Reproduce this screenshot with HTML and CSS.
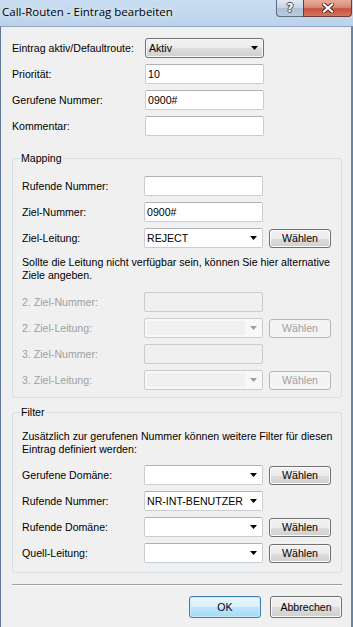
FILE: index.html
```html
<!DOCTYPE html>
<html>
<head>
    <meta charset="utf-8">
    <title>Call-Routen - Eintrag bearbeiten</title>
    <link rel="stylesheet" href="styles.css">
</head>
<body>
    <div id="dialog">
        <div id="titlebar">
            <span class="caption">Call-Routen - Eintrag bearbeiten</span>
            <div class="caption-buttons">
                <div class="cap-btn cap-help">?</div>
                <div class="cap-btn cap-close">
                    <svg width="12" height="10" viewBox="0 0 12 10">
                        <path d="M2 1.5 L10 8.5 M10 1.5 L2 8.5" stroke="#4a2a24" stroke-width="4" stroke-linecap="square"/>
                        <path d="M2 1.5 L10 8.5 M10 1.5 L2 8.5" stroke="#fff" stroke-width="2.2" stroke-linecap="square"/>
                    </svg>
                </div>
            </div>
        </div>
        <div id="client">
            <div class="rows">
                <div class="row">
                    <label>Eintrag aktiv/Defaultroute:</label>
                    <div class="combo list"><span class="value">Aktiv</span><span class="arrow"></span></div>
                </div>
                <div class="row">
                    <label>Priorität:</label>
                    <input type="text" class="edit" value="10">
                </div>
                <div class="row">
                    <label>Gerufene Nummer:</label>
                    <input type="text" class="edit" value="0900#">
                </div>
                <div class="row">
                    <label>Kommentar:</label>
                    <input type="text" class="edit" value="">
                </div>
            </div>

            <fieldset class="group mapping">
                <legend>Mapping</legend>
                <div class="rows">
                    <div class="row">
                        <label>Rufende Nummer:</label>
                        <input type="text" class="edit" value="">
                    </div>
                    <div class="row">
                        <label>Ziel-Nummer:</label>
                        <input type="text" class="edit" value="0900#">
                    </div>
                    <div class="row">
                        <label>Ziel-Leitung:</label>
                        <div class="combo"><span class="value">REJECT</span><span class="arrow"></span></div>
                        <button class="btn">Wählen</button>
                    </div>
                </div>
                <p class="hint">Sollte die Leitung nicht verfügbar sein, können Sie hier alternative<br>Ziele angeben.</p>
                <div class="rows">
                    <div class="row disabled">
                        <label>2. Ziel-Nummer:</label>
                        <input type="text" class="edit" disabled>
                    </div>
                    <div class="row disabled">
                        <label>2. Ziel-Leitung:</label>
                        <div class="combo"><span class="value"></span><span class="arrow"></span></div>
                        <button class="btn" disabled>Wählen</button>
                    </div>
                    <div class="row disabled">
                        <label>3. Ziel-Nummer:</label>
                        <input type="text" class="edit" disabled>
                    </div>
                    <div class="row disabled">
                        <label>3. Ziel-Leitung:</label>
                        <div class="combo"><span class="value"></span><span class="arrow"></span></div>
                        <button class="btn" disabled>Wählen</button>
                    </div>
                </div>
            </fieldset>

            <fieldset class="group filter">
                <legend>Filter</legend>
                <p class="hint">Zusätzlich zur gerufenen Nummer können weitere Filter für diesen<br>Eintrag definiert werden:</p>
                <div class="rows">
                    <div class="row">
                        <label>Gerufene Domäne:</label>
                        <div class="combo"><span class="value"></span><span class="arrow"></span></div>
                        <button class="btn">Wählen</button>
                    </div>
                    <div class="row">
                        <label>Rufende Nummer:</label>
                        <div class="combo"><span class="value">NR-INT-BENUTZER</span><span class="arrow"></span></div>
                    </div>
                    <div class="row">
                        <label>Rufende Domäne:</label>
                        <div class="combo"><span class="value"></span><span class="arrow"></span></div>
                        <button class="btn">Wählen</button>
                    </div>
                    <div class="row">
                        <label>Quell-Leitung:</label>
                        <div class="combo"><span class="value"></span><span class="arrow"></span></div>
                        <button class="btn">Wählen</button>
                    </div>
                </div>
            </fieldset>

            <div class="separator"></div>

            <div class="buttons">
                <button class="btn default">OK</button>
                <button class="btn">Abbrechen</button>
            </div>
        </div>
    </div>
</body>
</html>
```

FILE: styles.css
```css
body {
    margin: 0;
    padding: 0;
    overflow: hidden;
    font-family: "Liberation Sans", Arial, sans-serif;
    font-size: 10.6px;
    color: #000;
}
#dialog {
    width: 353px;
    height: 627px;
    display: flex;
    flex-direction: column;
    background-color: #bcd3ea;
}
#titlebar {
    height: 26px;
    flex-shrink: 0;
    display: flex;
    align-items: flex-start;
    background: linear-gradient(to bottom, #c9ddf1, #bad2ea);
}
.caption {
    font-family: "Open Sans", sans-serif;
    font-size: 11.5px;
    line-height: 16px;
    padding: 4px 0 0 2px;
    text-shadow: 0 0 5px #e4eefa, 0 0 9px #e4eefa;
}
.caption-buttons {
    margin-left: auto;
    margin-right: 1px;
    display: flex;
}
.cap-btn {
    height: 16px;
    display: flex;
    align-items: center;
    justify-content: center;
    border: 1px solid #5b6d83;
    border-top: none;
}
.cap-help {
    width: 26px;
    border-right: none;
    border-bottom-left-radius: 4px;
    background: linear-gradient(to bottom, #dfe8f2 0%, #c6d4e3 50%, #adc0d5 51%, #b9cadc 100%);
    color: #fff;
    font-family: "DejaVu Sans", sans-serif;
    font-weight: bold;
    font-size: 12px;
    text-shadow: 1px 0 0 #3d4a5a, -1px 0 0 #3d4a5a, 0 1px 0 #3d4a5a, 0 -1px 0 #3d4a5a;
}
.cap-close {
    width: 47px;
    border-color: #6e3a30;
    border-bottom-right-radius: 4px;
    background: linear-gradient(to bottom, #e8ab9b 0%, #d98a78 45%, #c8523e 55%, #d6745e 100%);
}
#client {
    flex-grow: 1;
    background-color: #f0f0f0;
    border-top: 1px solid #8fa5bd;
    border-left: 1px solid #5d7898;
    border-right: 2px solid #6a84a2;
    padding: 11px 9px 0 11px;
    display: flex;
    flex-direction: column;
}
.rows {
    display: flex;
    flex-direction: column;
    gap: 6px;
}
.row {
    display: flex;
    align-items: center;
    height: 20px;
}
.row label {
    width: 133px;
    flex-shrink: 0;
}
.group .row label {
    width: 122px;
}
.row.disabled label {
    color: #a0a0a0;
}
.edit {
    width: 119px;
    height: 20px;
    box-sizing: border-box;
    margin: 0;
    padding: 0 2px;
    border: 1px solid #c9ccd1;
    border-top-color: #aeb1b7;
    border-radius: 2px;
    background-color: #fff;
    font-family: inherit;
    font-size: 10.6px;
    color: #000;
    outline: none;
}
.edit:disabled {
    background-color: #f0f0f0;
    border-color: #cbcbcb;
}
.combo {
    width: 119px;
    height: 20px;
    box-sizing: border-box;
    display: flex;
    align-items: center;
    padding-left: 2px;
    border: 1px solid #c9ccd1;
    border-top-color: #aeb1b7;
    border-radius: 2px;
    background-color: #fff;
}
.combo .value {
    flex-grow: 1;
    overflow: hidden;
    white-space: nowrap;
}
.combo .arrow {
    width: 17px;
    height: 100%;
    flex-shrink: 0;
    display: flex;
    align-items: center;
    justify-content: center;
}
.combo .arrow::before {
    content: "";
    width: 7px;
    height: 4px;
    background-color: #000;
    clip-path: polygon(0 0, 100% 0, 50% 100%);
}
.combo.list {
    padding-left: 3px;
    border-color: #707070;
    border-radius: 3px;
    background: linear-gradient(to bottom, #f2f2f2 0%, #ebebeb 50%, #dddddd 51%, #cfcfcf 100%);
    box-shadow: inset 0 0 0 1px #f8f8f8;
}
.row.disabled .combo {
    border-color: #cbcbcb;
    background-color: #f8f8f8;
    padding: 2px 0 2px 2px;
}
.row.disabled .combo .value {
    height: 100%;
    background-color: #f0f0f0;
}
.row.disabled .combo .arrow::before {
    background-color: #a0a0a0;
}
.btn {
    width: 62px;
    height: 19px;
    margin: 0 0 0 6px;
    padding: 0;
    border: 1px solid #707070;
    border-radius: 3px;
    background: linear-gradient(to bottom, #f2f2f2 0%, #ebebeb 50%, #dddddd 51%, #cfcfcf 100%);
    box-shadow: inset 0 0 0 1px #fbfbfb;
    font-family: inherit;
    font-size: 10.6px;
    color: #000;
}
.btn:disabled {
    border-color: #b5b5b5;
    background: #f4f4f4;
    box-shadow: none;
    color: #a0a0a0;
}
.group {
    margin: 0;
    min-width: 0;
    border: 1px solid #d5dfe5;
    border-radius: 3px;
    padding: 11px 9px 7px 9px;
}
.group legend {
    padding: 0 1px;
    margin-left: -2px;
    line-height: 13px;
}
.mapping {
    margin-top: 16px;
}
.filter {
    margin-top: 8px;
    padding-bottom: 9px;
}
.hint {
    margin: 8px 0 10px 0;
    line-height: 13px;
    white-space: nowrap;
}
.filter .hint {
    margin: 0 0 9px 0;
}
.separator {
    margin-top: 11px;
    height: 0;
    border-top: 1px solid #a0a0a0;
    border-bottom: 1px solid #fff;
}
.buttons {
    margin-top: 10px;
    display: flex;
    justify-content: flex-end;
    gap: 9px;
}
.buttons .btn {
    width: 72px;
    height: 22px;
    margin: 0;
}
.btn.default {
    border-color: #3c7fb1;
    background: linear-gradient(to bottom, #eaf6fd 0%, #d9f0fc 50%, #bee6fd 51%, #a7d9f5 100%);
    box-shadow: inset 0 0 0 1px #c6e9fd;
}
```
